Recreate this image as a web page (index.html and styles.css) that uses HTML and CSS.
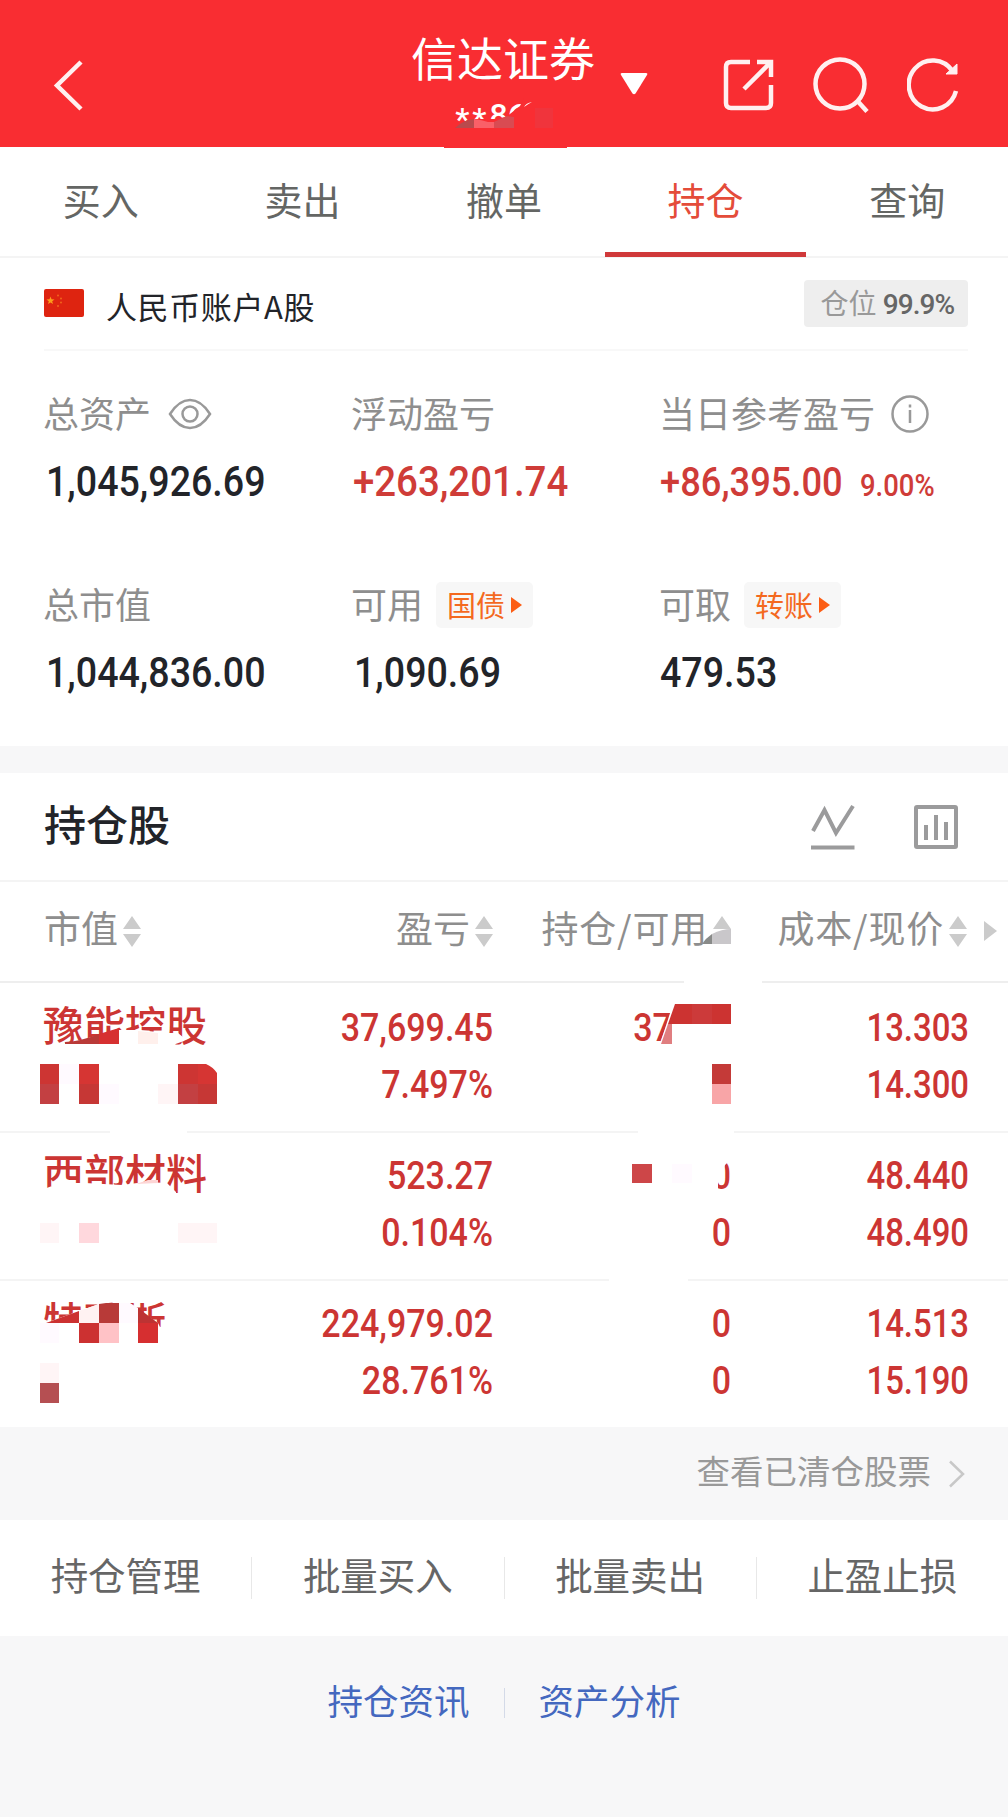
FILE: index.html
```html
<!DOCTYPE html>
<html lang="zh-CN">
<head>
    <meta charset="UTF-8">
    <meta name="viewport" content="width=device-width, initial-scale=1.0">
    <title>持仓</title>
    <link rel="stylesheet" href="styles.css">
</head>
<body>
    <header class="header">
        <svg class="back" width="34" height="60" viewBox="0 0 34 60"><path d="M30 7 L6 30.5 L30 54"/></svg>
        <div class="broker">
            <div class="broker-name">信达证券</div>
            <div class="broker-id"><span>**</span>86</div>
        </div>
        <svg class="caret" width="28" height="24" viewBox="0 0 28 24"><path d="M2 1 H26 Q28 1 27 3 L15.5 21.500 Q14 23 12.500 21.500 L1 3 Q0 1 2 1 Z"/></svg>
        <div class="header-icons">
            <svg width="52" height="52" viewBox="0 0 52 52"><path d="M27 3 H8 Q3 3 3 8 V44 Q3 49 8 49 H43 Q48 49 48 44 V26"/><path d="M34 3 H48 V18 M48 3 L21 30"/></svg>
            <svg width="56" height="56" viewBox="0 0 56 56"><circle cx="27" cy="27" r="24.500"/><path d="M44.500 44 L54 54.500"/></svg>
            <svg width="52" height="56" viewBox="0 0 52 56"><path d="M45.500 14 A24 24.500 0 1 0 49 34"/><path class="solid" d="M50 7 V17 H39 Z"/></svg>
        </div>
        <svg class="mask header-mask" width="140" height="50" viewBox="440 98 140 50">
            <path fill="#f92d32" d="M444 128 L455 128 L463 122 L474 119 H494 L506 117 L520 106 L524 98 H567 V148 H444 Z"/>
            <path fill="#b94a4d" d="M455 128 Q463 120 474 119 V128 Z"/>
            <path fill="#fa6068" d="M474 119 Q482 120 488 122 L494 122 V128 H474 Z"/>
            <path fill="#d94b52" d="M494 122 Q500 119 507 116 L514 117 V128 H494 Z"/>
            <path fill="#f0343c" d="M535 108 H553 V128 H535 Z"/>
            <path fill="#fff" d="M524 107 Q526 103 532 102 Q528 104 524 107 Z"/>
        </svg>
    </header>

    <nav class="tabs">
        <a>买入</a>
        <a>卖出</a>
        <a>撤单</a>
        <a class="active">持仓</a>
        <a>查询</a>
    </nav>

    <section class="account">
        <div class="account-bar">
            <svg class="flag" width="40" height="28" viewBox="0 0 40 28">
                <rect width="40" height="28" rx="2" fill="#de2410"/>
                <path fill="#fc9d1b" d="M6.500 7.500 L7.500 10.300 L10.500 10.400 L8.200 12.200 L9 15 L6.500 13.400 L4 15 L4.800 12.200 L2.500 10.400 L5.500 10.300 Z"/>
                <g fill="#f2651c"><circle cx="14" cy="6.500" r="1"/><circle cx="17" cy="9.500" r="1"/><circle cx="17" cy="13.500" r="1"/><circle cx="14" cy="17" r="1"/></g>
            </svg>
            <span class="account-name">人民币账户A股</span>
            <span class="position">仓位 <b>99.9%</b></span>
        </div>
        <div class="stats">
            <div class="stat">
                <div class="label"><span>总资产</span>
                    <svg class="eye" width="44" height="32" viewBox="0 0 44 32"><path d="M2 16 Q11 2 22 2 T42 16 Q33 30 22 30 T2 16 Z"/><circle cx="22" cy="16" r="7.500"/></svg>
                </div>
                <div class="value indent"><span class="num">1,045,926.69</span></div>
            </div>
            <div class="stat">
                <div class="label"><span>浮动盈亏</span></div>
                <div class="value red"><span class="num wide">+263,201.74</span></div>
            </div>
            <div class="stat">
                <div class="label"><span>当日参考盈亏</span>
                    <svg class="info" width="38" height="38" viewBox="0 0 38 38"><circle cx="19" cy="19" r="17.500"/><path d="M19 15 V28 M19 9.500 V12.500"/></svg>
                </div>
                <div class="value red today"><span class="num">+86,395.00</span><span class="num rate">9.00%</span></div>
            </div>
            <div class="stat">
                <div class="label"><span>总市值</span></div>
                <div class="value indent"><span class="num">1,044,836.00</span></div>
            </div>
            <div class="stat">
                <div class="label"><span>可用</span><div class="tag">国债<i></i></div></div>
                <div class="value indent"><span class="num">1,090.69</span></div>
            </div>
            <div class="stat">
                <div class="label"><span>可取</span><div class="tag">转账<i></i></div></div>
                <div class="value"><span class="num">479.53</span></div>
            </div>
        </div>
    </section>

    <section class="holdings">
        <div class="title-bar">
            <h2>持仓股</h2>
            <svg width="44" height="46" viewBox="0 0 44 46"><path d="M2 27 L13.500 6 L25 29 L42 2 M0 43.500 H43.500"/></svg>
            <svg width="44" height="44" viewBox="0 0 44 44"><rect x="2" y="2" width="40" height="40" rx="1"/><path d="M12 20 V35 M22 10 V35 M32 17 V35"/></svg>
        </div>

        <div class="row head">
            <div>市值<span class="sort"></span></div>
            <div>盈亏<span class="sort"></span></div>
            <div class="pair">持仓/可用<span class="sort"></span></div>
            <div class="pair">成本/现价<span class="sort"></span></div>
            <span class="more"></span>
        </div>

        <div class="list">
            <div class="row">
                <div class="name">豫能控股</div>
                <div><p>37,699.45</p><p>7.497%</p></div>
                <div><p class="partial">37</p></div>
                <div class="price"><p>13.303</p><p>14.300</p></div>
            </div>
            <div class="row">
                <div class="name">西部材料</div>
                <div><p>523.27</p><p>0.104%</p></div>
                <div><p>0</p><p>0</p></div>
                <div class="price"><p>48.440</p><p>48.490</p></div>
            </div>
            <div class="row">
                <div class="name">特瑞斯</div>
                <div><p>224,979.02</p><p>28.761%</p></div>
                <div><p>0</p><p>0</p></div>
                <div class="price"><p>14.513</p><p>15.190</p></div>
            </div>

            <!-- mosaic over the private figures -->
            <svg class="mask list-mask" width="1008" height="508" viewBox="0 920 1008 508">
                <path fill="#fff" d="M684 978 H762 V985 H684 Z M110 1129 H187 V1135 H110 Z M638 1129 H734 V1135 H638 Z M609 1277 H688 V1283 H609 Z"/>
                <path fill="#fff" d="M703 943 L713 933 Q722 929 731 929 V948 H703 Z"/>
                <path fill="#c9c7ca" d="M712 934 Q722 929 731 929 V944 H712 Z"/>
                <path fill="#898b89" d="M702 944 Q706 938 712 934 V944 Z"/>

                <path fill="#fff" d="M65 1044 L119 1030 L140 1030 L165 1033 L178 1033 L184 1038 L184 1041 L170 1046 V1050 H65 Z"/>
                <path fill="#b93a38" d="M65 1044 V1042 Q82 1041 99 1034 V1044 Z"/>
                <path fill="#d63031" d="M99 1034 L119 1028 V1044 H99 Z"/>
                <path fill="#fff0ec" d="M138 1031 L158 1033 V1044 H138 Z"/>
                <path fill="#cd3533" d="M40 1064 H59 V1084 H40 Z M178 1064 H198 V1084 H178 Z"/>
                <path fill="#c34042" d="M40 1084 H59 V1104 H40 Z M178 1084 H198 V1104 H178 Z"/>
                <path fill="#d63533" d="M79 1064 H99 V1084 H79 Z M198 1064 H206 Q213 1067 217 1073 V1084 H198 Z"/>
                <path fill="#c63735" d="M79 1084 H99 V1104 H79 Z M198 1084 H217 V1104 H198 Z"/>
                <path fill="#fffaff" d="M59 1064 H79 V1084 H59 Z M99 1084 H119 V1104 H99 Z"/>
                <path fill="#fff5f6" d="M158 1084 H178 V1104 H158 Z"/>
                <path fill="#fff" d="M673 1004 L660 1044 H690 V1004 Z"/>
                <path fill="#cc3331" d="M675 1004 H731 V1024 H668 Z"/>
                <path fill="#cc3a3a" d="M692 1004 H712 V1024 H692 Z"/>
                <path fill="#e07e80" d="M668 1024 H672 V1044 H661 Z"/>
                <path fill="#c43a38" d="M712 1064 H731 V1084 H712 Z"/>
                <path fill="#f8a5a7" d="M712 1084 H731 V1104 H712 Z"/>

                <path fill="#fff" d="M44 1189 L60 1183 L85 1183 L122 1185 L145 1182 L167 1183 L176 1192 V1200 H40 Z"/>
                <path fill="#fdd5d5" d="M136 1184 L148 1180 H158 V1183 Z"/>
                <path fill="#fff5f6" d="M40 1223 H59 V1243 H40 Z M178 1223 H217 V1243 H178 Z"/>
                <path fill="#ffd8dd" d="M79 1223 H99 V1243 H79 Z"/>
                <path fill="#cd4648" d="M632 1164 H652 V1183 H632 Z"/>
                <path fill="#fffaff" d="M672 1164 H692 V1183 H672 Z"/>
                <path fill="#fff" d="M706 1158 H732 L725 1165 L723 1176 L718 1183 L718 1192 H706 Z"/>

                <path fill="#fff" d="M40 1325 L79 1311 L99 1304 L108 1302 L130 1304 L158 1323 L160 1327 L170 1325 V1350 H40 Z"/>
                <path fill="#cc3131" d="M46 1323 L79 1311 V1323 Z M79 1323 H99 V1343 H79 Z"/>
                <path fill="#fff2f2" d="M79 1311 L99 1304 V1323 H79 Z"/>
                <path fill="#b83a38" d="M99 1304 L106 1303 H119 V1323 H99 Z"/>
                <path fill="#ffc2c6" d="M99 1323 H119 V1343 H99 Z"/>
                <path fill="#fffaff" d="M119 1303 H130 L138 1308 V1323 H119 Z M40 1323 H59 V1343 H40 Z"/>
                <path fill="#bd3333" d="M138 1308 L158 1323 H138 Z"/>
                <path fill="#d62f30" d="M138 1323 H158 V1343 H138 Z"/>
                <path fill="#fff5f6" d="M40 1363 H59 V1383 H40 Z"/>
                <path fill="#b54f52" d="M40 1383 H59 V1403 H40 Z"/>
            </svg>
        </div>
    </section>

    <a class="cleared">查看已清仓股票
        <svg width="18" height="28" viewBox="0 0 18 28"><path d="M2 1.500 L15 14 L2 26.500"/></svg>
    </a>

    <div class="actions">
        <a>持仓管理</a>
        <a>批量买入</a>
        <a>批量卖出</a>
        <a>止盈止损</a>
    </div>

    <footer class="links">
        <a>持仓资讯</a>
        <a>资产分析</a>
    </footer>
</body>
</html>
```
FILE: styles.css
```css
* {
    box-sizing: border-box;
}

body {
    margin: 0;
    width: 1008px;
    min-height: 1817px;
    background-color: #f7f7f8;
    font-family: "Noto Sans CJK SC", sans-serif;
    color: #222429;
}

svg {
    fill: none;
    flex: none;
}

p, h2 {
    margin: 0;
}

/* header */
.header {
    position: relative;
    display: flex;
    height: 147px;
    background-color: #f92d32;
    color: white;
}

.header svg {
    stroke: #fff0f0;
    stroke-width: 4.5;
}

.header .mask {
    stroke: none;
}

.header .back {
    margin: 55px 0 0 51px;
}

.broker {
    width: 184px;
    margin-left: 326px;
    text-align: center;
}

.broker-name {
    margin-top: 26px;
    font-size: 46px;
    line-height: 60px;
}

.broker-id {
    padding: 13px 25px 0 0;
    font: 500 32px/32px Roboto, sans-serif;
}

.broker-id span {
    letter-spacing: 3px;
    vertical-align: -4px;
}

.header .caret {
    margin: 72px 0 0 25px;
    fill: white;
    stroke: none;
}

.header-icons {
    display: flex;
    gap: 38px;
    margin: 57px 0 0 75px;
}

.header-icons svg:first-child {
    margin-top: 2px;
}

.header-icons .solid {
    fill: #fff0f0;
    stroke-width: 1;
}

.mask {
    position: absolute;
    pointer-events: none;
}

.header-mask {
    left: 440px;
    top: 98px;
}

/* tabs */
.tabs {
    display: flex;
    height: 111px;
    background: white;
    border-bottom: 2px solid #f4f4f4;
    font-size: 38px;
    color: #646664;
}

.tabs a {
    flex: 1;
    height: 110px;
    line-height: 104px;
    text-align: center;
}

.tabs .active {
    color: #e44c3a;
    border-bottom: 5px solid #d0393a;
}

/* account */
.account {
    height: 488px;
    padding: 0 40px 0 44px;
    background: white;
}

.account-bar {
    display: flex;
    align-items: center;
    height: 93px;
    border-bottom: 2px solid #f8f8f8;
}

.flag {
    margin-top: -1px;
}

.account-name {
    flex: 1;
    margin-left: 22px;
    padding-top: 4px;
    font-size: 31px;
    letter-spacing: 0.6px;
}

.position {
    height: 47px;
    margin-top: -1px;
    padding: 0 14px 0 17px;
    background-color: #eee;
    border-radius: 4px;
    font-size: 28px;
    line-height: 45px;
    color: #999;
    white-space: nowrap;
}

.position b {
    font: 500 28px Roboto, sans-serif;
    letter-spacing: -1px;
    color: #666;
}

.stats {
    display: grid;
    grid-template-columns: 308px 308px 1fr;
    padding-top: 35px;
}

.stat {
    height: 191px;
}

.label {
    display: flex;
    align-items: center;
    height: 56px;
    margin-left: -1px;
    font-size: 36px;
    color: #8e8e8e;
    white-space: nowrap;
}

.label > span {
    padding-bottom: 4px;
}

.label svg {
    stroke: #999;
    stroke-width: 2.5;
}

.eye {
    margin-left: 17px;
}

.info {
    margin-left: 16px;
}

.tag {
    display: flex;
    align-items: center;
    height: 46px;
    margin-left: 13px;
    padding: 0 11px 2px;
    background-color: #f7f7f7;
    border-radius: 5px;
    font-size: 29px;
    color: #f4691f;
}

.tag i {
    margin: 2px 0 0 6px;
    border-left: 11px solid #fc5d14;
    border-top: 8px solid transparent;
    border-bottom: 8px solid transparent;
}

.value {
    display: flex;
    align-items: baseline;
    height: 78px;
    font: 500 42px/80px Roboto, sans-serif;
    white-space: nowrap;
}

.indent {
    padding-left: 2px;
}

.num {
    transform: scaleX(0.895);
    transform-origin: left;
}

.wide {
    padding-left: 1px;
    transform: scaleX(0.915);
}

.red {
    color: #cf3c38;
}

.today {
    font-size: 41px;
}

.today .num {
    transform: scaleX(0.885);
}

.rate {
    margin-left: -6px;
    font-size: 31px;
}

/* holdings */
.holdings {
    margin-top: 27px;
    background: white;
}

.title-bar {
    display: flex;
    align-items: center;
    height: 109px;
    padding: 0 50px 0 44px;
    border-bottom: 2px solid #f4f4f4;
}

.title-bar h2 {
    flex: 1;
    padding-bottom: 8px;
    font-size: 42px;
    font-weight: 500;
}

.title-bar svg {
    margin-left: 59px;
    stroke: #9b9b9c;
    stroke-width: 4;
}

.row {
    display: grid;
    grid-template-columns: 218px 231px 238px 238px;
    height: 148px;
    padding: 15px 0 0 44px;
    border-bottom: 2px solid #f4f4f4;
    text-align: right;
    color: #cc3533;
}

.head {
    position: relative;
    height: 101px;
    padding-top: 0;
    font-size: 37px;
    line-height: 90px;
    color: #8e8e8e;
    border-bottom-color: #eee;
}

.head div {
    display: flex;
    justify-content: flex-end;
    white-space: nowrap;
}

.head div:first-child {
    justify-content: flex-start;
}

.head .pair {
    letter-spacing: 0.8px;
}

.sort {
    width: 18px;
    height: 31px;
    margin: 34px 0 0 5px;
    background-color: #cbcbcb;
    clip-path: polygon(50% 0, 100% 42%, 0 42%, 0 58%, 100% 58%, 50% 100%, 0 58%, 0 42%);
}

.pair:nth-child(4) {
    padding-right: 2px;
}

.more {
    position: absolute;
    left: 984px;
    top: 39px;
    border-left: 13px solid #cbcbcb;
    border-top: 10px solid transparent;
    border-bottom: 10px solid transparent;
}

.list {
    position: relative;
}

.list .row:nth-child(1) {
    height: 150px;
    padding-top: 17px;
}

.list .row:nth-child(3) {
    height: 146px;
    border-bottom: 0;
}

.name {
    margin-left: -1px;
    font-size: 41px;
    font-weight: 500;
    line-height: 46px;
    text-align: left;
}

.row p {
    font: 500 38px/57px Roboto, sans-serif;
    transform: scaleX(0.895);
    transform-origin: right;
}

.row .price p {
    transform: scaleX(0.865);
}

.row .partial {
    padding-right: 66px;
}

.list-mask {
    left: 0;
    top: -63px;
}

/* bottom */
.cleared {
    display: flex;
    align-items: center;
    justify-content: flex-end;
    height: 93px;
    padding: 0 42px 9px 0;
    font-size: 33.5px;
    color: #999;
}

.cleared svg {
    margin: 10px 0 0 17px;
    stroke: #c8c8c8;
    stroke-width: 2.5;
}

.actions {
    display: flex;
    align-items: center;
    height: 116px;
    background: white;
    font-size: 37.5px;
    color: #666;
}

.actions a {
    flex: 1;
    height: 42px;
    line-height: 34px;
    text-align: center;
}

.actions a + a {
    border-left: 1px solid #e8e8e8;
}

.links {
    display: flex;
    justify-content: center;
    padding-top: 52px;
    font-size: 35.5px;
    line-height: 24px;
    color: #4468bf;
}

.links a {
    height: 30px;
    padding: 0 34px;
}

.links a + a {
    border-left: 1px solid #d4dae8;
}
```
